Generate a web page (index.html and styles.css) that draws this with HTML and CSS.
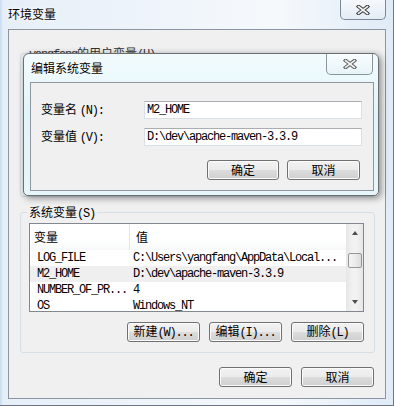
FILE: index.html
```html
<!DOCTYPE html>
<html lang="zh">
<head>
  <meta charset="UTF-8">
  <title>环境变量</title>
  <link rel="stylesheet" href="styles.css">
</head>
<body>
  <div class="window">
    <div class="titlebar">
      <span class="title">环境变量</span>
      <button class="close">
        <svg width="14" height="10" viewBox="0 0 14 10"><path d="M2.5 1.5 L11.5 8.5 M11.5 1.5 L2.5 8.5" stroke="#3c3c3c" stroke-width="3.6" stroke-linecap="square"/><path d="M2.5 1.5 L11.5 8.5 M11.5 1.5 L2.5 8.5" stroke="#f4f4f4" stroke-width="1.6" stroke-linecap="square"/></svg>
      </button>
    </div>

    <div class="client">
      <div class="group user">
        <span class="legend"><span class="a">yangfang</span>的用户变量<span class="a">(U)</span></span>
      </div>

      <div class="group sys">
        <span class="legend">系统变量<span class="a">(S)</span></span>
        <div class="list">
          <div class="rows">
            <div class="head"><span class="c1">变量</span><span class="c2">值</span></div>
            <div class="row"><span class="c1 mono">LOG_FILE</span><span class="c2 mono">C:\Users\yangfang\AppData\Local...</span></div>
            <div class="row sel"><span class="c1 mono">M2_HOME</span><span class="c2 mono">D:\dev\apache-maven-3.3.9</span></div>
            <div class="row"><span class="c1 mono">NUMBER_OF_PR...</span><span class="c2 mono">4</span></div>
            <div class="row"><span class="c1 mono">OS</span><span class="c2 mono">Windows_NT</span></div>
          </div>
          <div class="scroll">
            <span class="arrow up"></span>
            <span class="thumb"></span>
            <span class="arrow down"></span>
          </div>
        </div>
        <div class="btns">
          <button class="btn">新建<span class="a">(W)...</span></button>
          <button class="btn">编辑<span class="a">(I)...</span></button>
          <button class="btn">删除<span class="a">(L)</span></button>
        </div>
      </div>

      <div class="btns bottom">
        <button class="btn">确定</button>
        <button class="btn">取消</button>
      </div>
    </div>

    <!-- child dialog over the parent window -->
    <div class="dialog">
      <div class="dtitle">
        <span class="title">编辑系统变量</span>
        <button class="close small">
          <svg width="14" height="10" viewBox="0 0 14 10"><path d="M2.5 1.5 L11.5 8.5 M11.5 1.5 L2.5 8.5" stroke="#5a5a5a" stroke-width="3.6" stroke-linecap="square"/><path d="M2.5 1.5 L11.5 8.5 M11.5 1.5 L2.5 8.5" stroke="#f4f4f4" stroke-width="1.6" stroke-linecap="square"/></svg>
        </button>
      </div>
      <div class="dclient">
        <div class="field"><label>变量名 <span class="a">(N):</span></label><div class="input mono">M2_HOME</div></div>
        <div class="field"><label>变量值 <span class="a">(V):</span></label><div class="input mono">D:\dev\apache-maven-3.3.9</div></div>
        <div class="btns">
          <button class="btn">确定</button>
          <button class="btn">取消</button>
        </div>
      </div>
    </div>
  </div>
</body>
</html>
```

FILE: styles.css
```css
* { box-sizing: border-box; margin: 0; padding: 0; }
html, body { width: 394px; height: 406px; overflow: hidden; }
body {
  font-family: "Noto Sans CJK SC", sans-serif;
  font-size: 12px;
  color: #000;
  background: #dfeaf5;
}
.a, .mono {
  font-family: "Liberation Mono", "Noto Sans CJK SC", monospace;
  font-size: 12px;
  letter-spacing: -1.2px;
}
.window {
  position: relative;
  width: 394px;
  height: 406px;
  padding: 0 7px 7px 8px;
  background: linear-gradient(to right, #c6dbef 0, #e6eff8 3px, #eef4fa 40%, #f6f9fc 70%, #dfebf7 100%);
  border-right: 1px solid #6d7784;
  border-bottom: 1px solid #6d7784;
}
.titlebar {
  height: 29px;
  display: flex;
  justify-content: space-between;
  align-items: flex-start;
}
.title {
  padding-top: 7px;
  line-height: 14px;
  text-shadow: 0 0 6px #fff, 0 0 3px #fff;
}
.close {
  width: 46px;
  height: 20px;
  border: 1px solid #7b8896;
  border-top: none;
  border-radius: 0 0 5px 5px;
  background: linear-gradient(#f6f9fc, #e3ecf5);
  display: flex;
  align-items: center;
  justify-content: center;
}
.close.small {
  width: 47px;
  height: 21px;
  margin-right: 1px;
  border-color: #8d9499;
  background: linear-gradient(#fafeff, #e6f4f8);
}
.client {
  height: 370px;
  border: 1px solid #8b96a2;
  background: #f0f0f0;
  display: flex;
  flex-direction: column;
}
.group {
  position: relative;
  border: 1px solid #d5dfe5;
  border-radius: 3px;
  margin: 0 10px 0 11px;
}
.group .legend {
  position: absolute;
  top: -8px;
  left: 6px;
  padding: 0 2px;
  line-height: 14px;
  background: #f0f0f0;
  white-space: nowrap;
}
.group.user { margin-top: 23px; height: 144px; }
.group.user .legend { color: #333; }
.group.sys { margin-top: 15px; height: 141px; padding: 10px 10px 10px 8px; }
.list {
  height: 89px;
  border: 1px solid #828790;
  background: #fff;
  display: flex;
  overflow: hidden;
}
.rows { flex: 1; overflow: hidden; }
.head, .row { display: flex; white-space: nowrap; }
.head {
  height: 26px;
  line-height: 26px;
  background: linear-gradient(#fff, #fff 60%, #f7f8f9);
}
.head .c1 { width: 100px; padding-left: 4px; border-right: 1px solid #e3e5e8; }
.head .c2 { padding-left: 6px; }
.row { height: 16px; line-height: 16px; }
.row .c1 { width: 100px; padding-left: 7px; }
.row .c2 { padding-left: 3px; }
.row.sel { background: #efefef; }
.scroll {
  width: 17px;
  background: linear-gradient(to right, #e6e6e6, #f2f2f2 40%, #f2f2f2 60%, #e6e6e6);
  display: flex;
  flex-direction: column;
  align-items: center;
}
.arrow {
  width: 0;
  height: 0;
  border-left: 3.5px solid transparent;
  border-right: 3.5px solid transparent;
}
.arrow.up { margin-top: 7px; border-bottom: 4px solid #4d4d4d; }
.arrow.down { margin-top: auto; margin-bottom: 7px; border-top: 4px solid #4d4d4d; }
.thumb {
  width: 14px;
  height: 15px;
  margin-top: 18px;
  border: 1px solid #979797;
  border-radius: 2px;
  background: linear-gradient(to right, #f4f4f4, #ececec 50%, #dcdcdc);
}
.btns {
  display: flex;
  justify-content: flex-end;
  gap: 9px;
  margin-top: 10px;
}
.btns.bottom { margin-top: 14px; padding-right: 11px; }
.btn {
  width: 73px;
  height: 20px;
  border: 1px solid #707070;
  border-radius: 3px;
  background: linear-gradient(#f2f2f2 0, #ebebeb 50%, #dddddd 50%, #cfcfcf 100%);
  box-shadow: inset 0 0 0 1px #fbfbfb;
  font-family: "Noto Sans CJK SC", sans-serif;
  font-size: 12px;
  line-height: 16px;
  color: #000;
}
.dialog {
  position: absolute;
  left: 23px;
  top: 53px;
  width: 356px;
  height: 143px;
  padding: 0 4px 4px 6px;
  border: 1px solid #6a6f73;
  border-radius: 6px 6px 5px 5px;
  background: linear-gradient(#f2fbfe, #e2f5fa 40%, #e6f6fa);
  box-shadow: 2px 2px 7px rgba(0, 0, 0, .45);
  display: flex;
  flex-direction: column;
}
.dtitle {
  height: 28px;
  display: flex;
  justify-content: space-between;
  align-items: flex-start;
}
.dtitle .title { padding-left: 1px; }
.dclient {
  flex: 1;
  border: 1px solid #8e979d;
  background: #f0f0f0;
  padding: 18px 11px 0 10px;
}
.field {
  display: flex;
  align-items: center;
  height: 18px;
  margin-bottom: 9px;
}
.field label { width: 103px; line-height: 14px; white-space: nowrap; }
.input {
  flex: 1;
  height: 18px;
  line-height: 16px;
  padding-left: 2px;
  background: #fff;
  border: 1px solid #dbdfe6;
  border-top-color: #abadb3;
}
.dclient .btns { margin-top: 14px; padding-right: 2px; gap: 8px; }
.dclient .btn:first-child { width: 72px; }
```
